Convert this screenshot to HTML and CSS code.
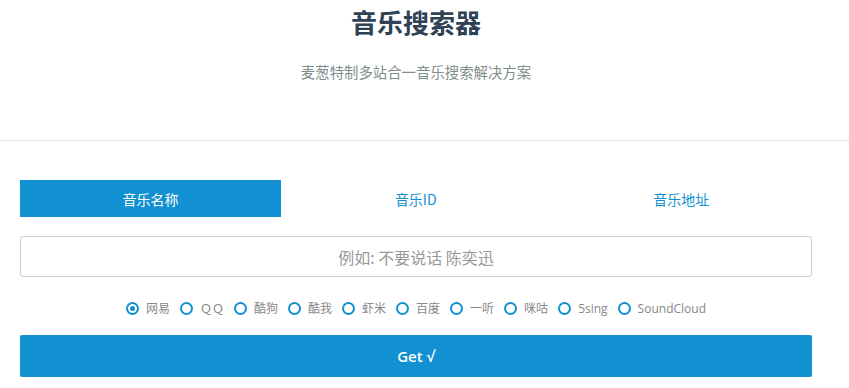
FILE: index.html
```html
<!DOCTYPE html>
<html lang="zh">
<head>
<meta charset="utf-8">
<title>音乐搜索器</title>
<link rel="stylesheet" href="styles.css">
</head>
<body>
<header class="header">
  <div class="wrap">
    <h1 class="title">音乐搜索器</h1>
    <p class="subtitle">麦葱特制多站合一音乐搜索解决方案</p>
  </div>
</header>
<main class="wrap main">
  <nav class="tabs">
    <a class="tab active">音乐名称</a>
    <a class="tab">音乐ID</a>
    <a class="tab">音乐地址</a>
  </nav>
  <input class="search" type="text" placeholder="例如: 不要说话 陈奕迅">
  <div class="sources">
    <label class="src"><span class="radio checked"></span>网易</label>
    <label class="src"><span class="radio"></span>ＱＱ</label>
    <label class="src"><span class="radio"></span>酷狗</label>
    <label class="src"><span class="radio"></span>酷我</label>
    <label class="src"><span class="radio"></span>虾米</label>
    <label class="src"><span class="radio"></span>百度</label>
    <label class="src"><span class="radio"></span>一听</label>
    <label class="src"><span class="radio"></span>咪咕</label>
    <label class="src"><span class="radio"></span>5sing</label>
    <label class="src"><span class="radio"></span>SoundCloud</label>
  </div>
  <button class="go">Get √</button>
</main>
</body>
</html>
```
FILE: styles.css
```css
* { box-sizing: border-box; }
html, body { margin: 0; padding: 0; background: #fff; }
body {
  font-family: "Open Sans", "Noto Sans CJK SC", sans-serif;
  color: #555;
}
.wrap {
  width: 792px;
  margin-left: 20px;
}
.header {
  border-bottom: 1px solid #eaeaea;
  padding: 3px 0 0;
  height: 141px;
}
.title {
  margin: 0;
  text-align: center;
  font-family: "Noto Sans CJK SC", sans-serif;
  font-size: 26px;
  font-weight: 700;
  line-height: 38px;
  color: #2f4154;
}
.subtitle {
  margin: 21px 0 0;
  text-align: center;
  font-family: "Noto Sans CJK SC", sans-serif;
  font-size: 14.4px;
  line-height: 20px;
  color: #7f8c8d;
}
.main {
  padding-top: 39px;
}
.tabs {
  display: flex;
  gap: 4px;
}
.tab {
  flex: 1;
  height: 37px;
  display: flex;
  align-items: center;
  justify-content: center;
  font-family: "Noto Sans CJK SC", sans-serif;
  font-size: 14px;
  color: #1190d2;
}
.tab.active {
  background: #1190d2;
  color: #fff;
  flex: 0 0 261px;
}
.search {
  display: block;
  width: 100%;
  height: 41px;
  margin-top: 19px;
  border: 1px solid #ccc;
  border-radius: 3px;
  text-align: center;
  font-family: "Noto Sans CJK SC", sans-serif;
  font-size: 16px;
  outline: none;
}
.search::placeholder { color: #999; }
.sources {
  display: flex;
  justify-content: center;
  align-items: center;
  margin-top: 21px;
  height: 20px;
  padding-left: 10px;
}
.src {
  display: flex;
  align-items: center;
  font-family: "Open Sans", "Noto Sans CJK SC", sans-serif;
  font-size: 12px;
  color: #888;
  margin-right: 10px;
}
.radio {
  width: 13px;
  height: 13px;
  border: 2px solid #1190d2;
  border-radius: 50%;
  margin-right: 7px;
  display: flex;
  align-items: center;
  justify-content: center;
}
.radio.checked::after {
  content: "";
  width: 5px;
  height: 5px;
  border-radius: 50%;
  background: #1190d2;
}
.go {
  display: block;
  width: 100%;
  height: 42px;
  margin-top: 17px;
  border: none;
  border-radius: 2px;
  background: #1190d2;
  color: #fff;
  font-family: "Open Sans", "Noto Sans CJK SC", sans-serif;
  font-size: 15px;
  font-weight: 600;
}
```
